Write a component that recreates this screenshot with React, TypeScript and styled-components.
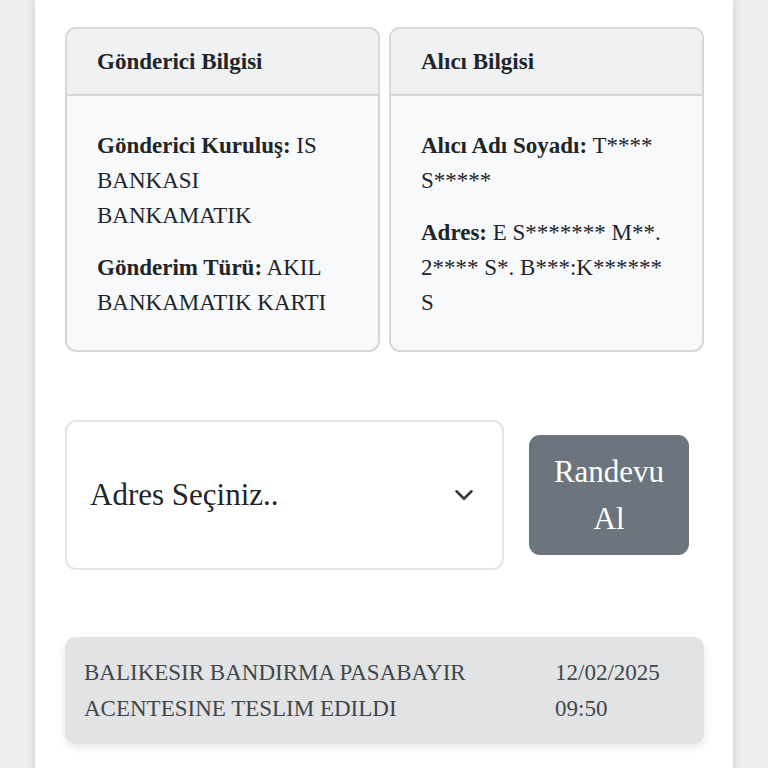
import { FC } from 'react';
import styled, { createGlobalStyle } from 'styled-components';

const GlobalStyle = createGlobalStyle`
  html, body {
    margin: 0;
    padding: 0;
    background: #efefef;
    font-family: "Liberation Serif", "Times New Roman", serif;
    color: #212529;
  }
  * { box-sizing: border-box; }
`;

const Page = styled.div`
  padding-left: 35px;
  width: 733px;
`;

const Panel = styled.div`
  background: #fff;
  min-height: 820px;
  padding: 27px 29px 60px 30px;
  box-shadow: 0 0 10px rgba(0, 0, 0, 0.16);
`;

const CardRow = styled.div`
  display: grid;
  grid-template-columns: 1fr 1fr;
  gap: 9px;
`;

const Card = styled.div`
  border: 2px solid #d6d7d8;
  border-radius: 11px;
  background: #f8f9fa;
  overflow: hidden;
  font-size: 23px;
  line-height: 35px;
`;

const CardHeader = styled.div`
  background: #f0f1f2;
  border-bottom: 2px solid #d6d7d8;
  padding: 15px 30px 15px;
  font-weight: bold;
`;

const CardBody = styled.div`
  padding: 32px 30px 30px;
`;

const Field = styled.p`
  margin: 0 0 17px;
  &:last-child { margin-bottom: 0; }
  b { font-weight: bold; }
`;

const ActionRow = styled.div`
  margin-top: 68px;
  display: grid;
  grid-template-columns: 1fr 160px;
  gap: 25px;
  align-items: center;
  padding-right: 15px;
`;

const SelectBox = styled.div`
  height: 150px;
  border: 2px solid #e3e5e8;
  border-radius: 11px;
  background: #fff;
  display: flex;
  align-items: center;
  justify-content: space-between;
  padding: 0 28px 0 23px;
  font-size: 31px;
  color: #212529;
`;

const Button = styled.button`
  background: #6c757d;
  color: #fff;
  border: none;
  border-radius: 11px;
  font-family: "Liberation Serif", "Times New Roman", serif;
  font-size: 31px;
  line-height: 47px;
  padding: 13px 20px;
  text-align: center;
`;

const History = styled.div`
  margin-top: 67px;
  background: #e2e3e5;
  border-radius: 11px;
  box-shadow: 0 3px 8px rgba(0, 0, 0, 0.1);
  padding: 18px 19px 18px 19px;
  display: grid;
  grid-template-columns: 1fr 130px;
  gap: 20px;
  font-size: 23px;
  line-height: 35.5px;
  color: #41464b;
`;

const Chevron: FC = () => (
  <svg width="20" height="20" viewBox="0 0 16 16" fill="none">
    <path d="M2 5l6 6 6-6" stroke="#343a40" strokeWidth="2" strokeLinecap="round" strokeLinejoin="round" />
  </svg>
);

export default function App() {
  return (
    <>
      <GlobalStyle />
      <Page>
        <Panel>
          <CardRow>
            <Card>
              <CardHeader>Gönderici Bilgisi</CardHeader>
              <CardBody>
                <Field><b>Gönderici Kuruluş:</b> IS BANKASI BANKAMATIK</Field>
                <Field><b>Gönderim Türü:</b> AKIL BANKAMATIK KARTI</Field>
              </CardBody>
            </Card>
            <Card>
              <CardHeader>Alıcı Bilgisi</CardHeader>
              <CardBody>
                <Field><b>Alıcı Adı Soyadı:</b> T**** S*****</Field>
                <Field><b>Adres:</b> E S******* M**. 2**** S*. B***:K****** S</Field>
              </CardBody>
            </Card>
          </CardRow>
          <ActionRow>
            <SelectBox>
              <span>Adres Seçiniz..</span>
              <Chevron />
            </SelectBox>
            <Button>Randevu Al</Button>
          </ActionRow>
          <History>
            <div>BALIKESIR BANDIRMA PASABAYIR ACENTESINE TESLIM EDILDI</div>
            <div>12/02/2025 09:50</div>
          </History>
        </Panel>
      </Page>
    </>
  );
}
